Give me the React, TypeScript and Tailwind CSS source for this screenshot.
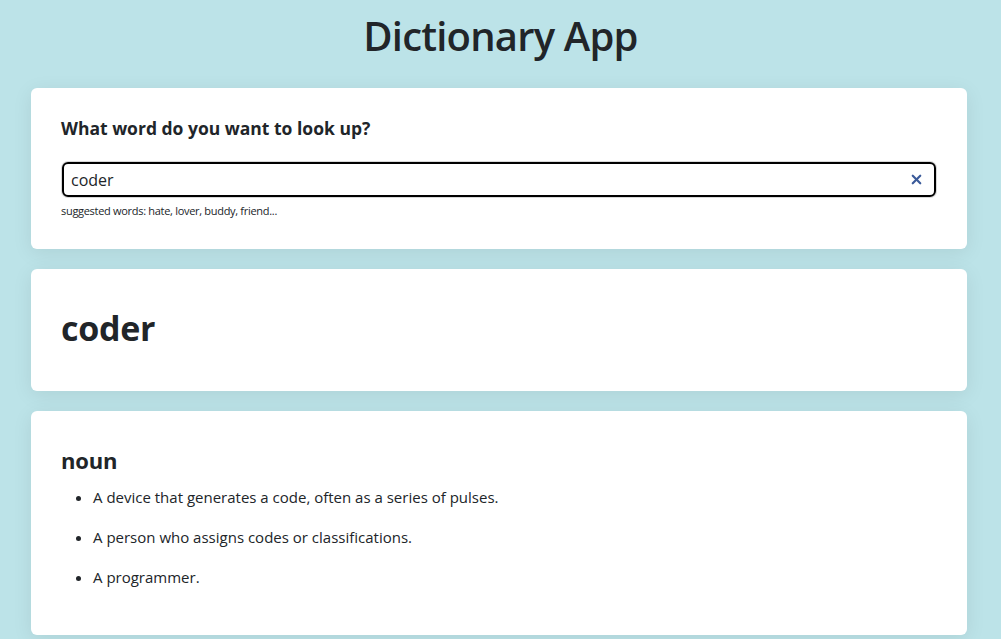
import { X } from 'lucide-react';

const definitions = [
  'A device that generates a code, often as a series of pulses.',
  'A person who assigns codes or classifications.',
  'A programmer.',
];

export default function App() {
  return (
    <div className="min-h-screen bg-[#bce3e8] text-[#212529] font-['Open_Sans',sans-serif] pl-[31px] pr-[34px] pb-8">
      <h1 className="text-center text-[40px] font-semibold leading-[48px] pt-[12px] mb-[28px] tracking-[-0.8px] pl-[3px]">
        Dictionary App
      </h1>

      {/* Search */}
      <section className="bg-white rounded-md shadow-[0_4px_20px_rgba(0,0,0,0.08)] px-[30px] pt-[28px] pb-[30px]">
        <h2 className="text-[17.5px] font-bold leading-[25px]">What word do you want to look up?</h2>
        <div className="relative mt-[21px] rounded-[6px] ring-[1px] ring-[#d8d8d8] mx-[1px]">
          <input
            defaultValue="coder"
            className="w-full h-[35px] rounded-[6px] border-2 border-black px-[7px] text-[16px] outline-none"
          />
          <X size={15} strokeWidth={3.5} className="absolute right-[12px] top-[10px] text-[#3b5b9a]" />
        </div>
        <p className="text-[11px] leading-[16px] mt-[6px] tracking-[-0.3px]">suggested words: hate, lover, buddy, friend...</p>
      </section>

      {/* Word */}
      <section className="bg-white rounded-md shadow-[0_4px_20px_rgba(0,0,0,0.08)] mt-[20px] px-[30px] pt-[35px] pb-[39px]">
        <h2 className="text-[34px] font-bold leading-[48px] tracking-[-0.3px]">coder</h2>
      </section>

      {/* Meaning */}
      <section className="bg-white rounded-md shadow-[0_4px_20px_rgba(0,0,0,0.08)] mt-[20px] px-[30px] pt-[34px] pb-[30px]">
        <h3 className="text-[22px] font-bold leading-[30px] tracking-[-0.2px]">noun</h3>
        <ul className="list-disc pl-[32px] mt-[10px]">
          {definitions.map((d) => (
            <li key={d} className="text-[15px] leading-[24px] mb-[16px]">
              {d}
            </li>
          ))}
        </ul>
      </section>
    </div>
  );
}
